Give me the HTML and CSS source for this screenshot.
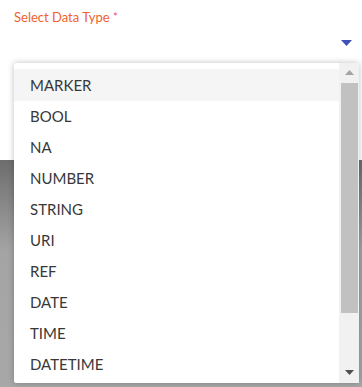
FILE: index.html
```html
<!DOCTYPE html>
<html lang="en">
<head>
  <meta charset="UTF-8">
  <title>Select Data Type</title>
  <link rel="stylesheet" href="styles.css">
</head>
<body>

  <div class="page">
    <div class="field">
      <label class="field-label">Select Data Type <span class="required">*</span></label>
      <div class="select">
        <svg class="select-arrow" width="11" height="6" viewBox="0 0 11 6"><path d="M0 0H11L5.5 6Z" fill="#3f51b5"/></svg>
      </div>
    </div>
    <div class="backdrop"></div>

    <div class="dropdown">
      <ul class="options">
        <li class="option active">MARKER</li>
        <li class="option">BOOL</li>
        <li class="option">NA</li>
        <li class="option">NUMBER</li>
        <li class="option">STRING</li>
        <li class="option">URI</li>
        <li class="option">REF</li>
        <li class="option">DATE</li>
        <li class="option">TIME</li>
        <li class="option">DATETIME</li>
      </ul>
      <div class="scrollbar">
        <svg class="scroll-btn" width="9" height="5" viewBox="0 0 9 5"><path d="M0 5H9L4.5 0Z" fill="#a3a3a3"/></svg>
        <div class="thumb"></div>
        <svg class="scroll-btn down" width="9" height="5" viewBox="0 0 9 5"><path d="M0 0H9L4.5 5Z" fill="#505050"/></svg>
      </div>
    </div>
  </div>

</body>
</html>
```

FILE: styles.css
```css
body {
  margin: 0;
  background-color: #fff;
  font-family: Lato, "Open Sans", sans-serif;
}

.page {
  position: relative;
  width: 362px;
  height: 387px;
  overflow: hidden;
}

.field {
  padding: 8px 0 0 14px;
  height: 152px;
}

.field-label {
  display: block;
  font-size: 13px;
  line-height: 18px;
  color: #f0622d;
}

.required {
  color: #f0487a;
  font-size: 11px;
  vertical-align: top;
}

.select {
  display: flex;
  justify-content: flex-end;
  padding: 14px 10px 0 0;
}

.backdrop {
  height: 227px;
  background: linear-gradient(#6d6d6d, #a4a4a4 40%, #a8a8a8);
}

.dropdown {
  position: absolute;
  left: 14px;
  top: 63px;
  width: 345px;
  height: 320px;
  display: flex;
  background-color: #fff;
  border-radius: 2px;
  box-shadow: 0 0 6px rgba(0, 0, 0, 0.25);
}

.options {
  flex: 1;
  list-style: none;
  margin: 0;
  padding: 6px 0 0;
}

.option {
  height: 31px;
  line-height: 33px;
  padding-left: 16px;
  font-size: 15px;
  color: #383838;
}

.option.active {
  height: 32px;
  margin-bottom: -1px;
  background-color: #f5f5f5;
}

.scrollbar {
  width: 20px;
  display: flex;
  flex-direction: column;
  align-items: center;
  background-color: #f1f1f1;
}

.scroll-btn {
  margin: 7px 0 8px;
}

.scroll-btn.down {
  margin: auto 0 8px;
}

.thumb {
  width: 17px;
  height: 230px;
  background-color: #c1c1c1;
}
```
